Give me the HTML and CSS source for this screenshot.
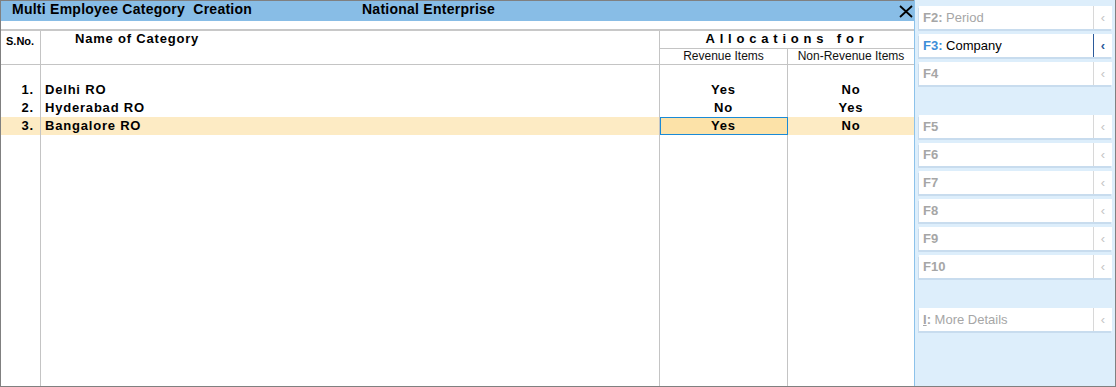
FILE: index.html
```html
<!DOCTYPE html>
<html lang="en">
<head>
  <meta charset="UTF-8" />
  <title>Multi Employee Category Creation</title>
  <link rel="stylesheet" href="styles.css">
</head>
<body>

  <div class="window">
    <div class="main">
      <div class="titlebar">
        <span class="title-name">Multi Employee Category  Creation</span>
        <span class="title-company">National Enterprise</span>
        <span class="close">
          <svg width="14" height="13" viewBox="0 0 14 13"><path d="M1 1 L13 12 M13 1 L1 12" stroke="#000" stroke-width="1.8" fill="none"/></svg>
        </span>
      </div>
      <div class="title-gap"></div>

      <div class="table-head">
        <div class="th th-sno">S.No.</div>
        <div class="th th-name">Name of Category</div>
        <div class="th th-alloc">Allocations for</div>
        <div class="th th-sub th-rev">Revenue Items</div>
        <div class="th th-sub">Non-Revenue Items</div>
      </div>

      <div class="row row-spacer">
        <div class="cell"></div><div class="cell"></div><div class="cell"></div><div class="cell"></div>
      </div>
      <div class="row">
        <div class="cell sno">1.</div>
        <div class="cell name">Delhi RO</div>
        <div class="cell yn">Yes</div>
        <div class="cell yn">No</div>
      </div>
      <div class="row">
        <div class="cell sno">2.</div>
        <div class="cell name">Hyderabad RO</div>
        <div class="cell yn">No</div>
        <div class="cell yn">Yes</div>
      </div>
      <div class="row current">
        <div class="cell sno">3.</div>
        <div class="cell name">Bangalore RO</div>
        <div class="cell yn selected">Yes</div>
        <div class="cell yn">No</div>
      </div>
      <div class="row row-fill">
        <div class="cell"></div><div class="cell"></div><div class="cell"></div><div class="cell"></div>
      </div>
    </div>

    <div class="panel">
      <div class="fkey"><span class="label"><b>F2:</b> Period</span><span class="arrow">‹</span></div>
      <div class="fkey active"><span class="label"><b>F3:</b> Company</span><span class="arrow">‹</span></div>
      <div class="fkey"><span class="label"><b>F4</b></span><span class="arrow">‹</span></div>
      <div class="fkey gap-before"><span class="label"><b>F5</b></span><span class="arrow">‹</span></div>
      <div class="fkey"><span class="label"><b>F6</b></span><span class="arrow">‹</span></div>
      <div class="fkey"><span class="label"><b>F7</b></span><span class="arrow">‹</span></div>
      <div class="fkey"><span class="label"><b>F8</b></span><span class="arrow">‹</span></div>
      <div class="fkey"><span class="label"><b>F9</b></span><span class="arrow">‹</span></div>
      <div class="fkey"><span class="label"><b>F10</b></span><span class="arrow">‹</span></div>
      <div class="fkey gap-before"><span class="label"><b><u>I</u>:</b> More Details</span><span class="arrow">‹</span></div>
    </div>
  </div>

</body>
</html>
```

FILE: styles.css
```css
* {
  box-sizing: border-box;
}

body {
  margin: 0;
  font-family: 'Liberation Sans', Arial, sans-serif;
  color: #000;
  background-color: #fff;
}

.window {
  width: 1116px;
  height: 387px;
  display: flex;
  border-left: 1px solid #808080;
  border-right: 1px solid #808080;
  border-bottom: 1px solid #808080;
}

/* left part: the form */
.main {
  width: 913px;
  display: flex;
  flex-direction: column;
  border-top: 1px solid #808080;
}

.titlebar {
  height: 20px;
  flex-shrink: 0;
  display: flex;
  background-color: #88bde6;
  padding-left: 11px;
  font-size: 14px;
  font-weight: bold;
  line-height: 17px;
  letter-spacing: 0.25px;
}

.title-name {
  width: 350px;
  white-space: pre;
}

.close {
  margin-left: auto;
  margin-right: 1px;
  padding-top: 4px;
  line-height: 0;
}

.title-gap {
  height: 10px;
  flex-shrink: 0;
  border-bottom: 2px solid #c8c8c8;
}

.table-head {
  display: grid;
  grid-template-columns: 40px 619px 128px 126px;
  grid-template-rows: 18px 16px;
  flex-shrink: 0;
}

.th {
  border-bottom: 1px solid #c4c4c4;
  line-height: 14px;
  padding-top: 1px;
}

.th-sno {
  grid-row: 1 / 3;
  border-right: 1px solid #c4c4c4;
  padding-left: 5px;
  padding-top: 3px;
  font-size: 11px;
  font-weight: bold;
}

.th-name {
  grid-row: 1 / 3;
  border-right: 1px solid #c4c4c4;
  padding-left: 34px;
  font-size: 13px;
  font-weight: bold;
  letter-spacing: 0.8px;
}

.th-alloc {
  grid-column: 3 / 5;
  text-align: center;
  font-size: 13px;
  font-weight: bold;
  letter-spacing: 4.8px;
}

.th-sub {
  text-align: center;
  font-size: 12px;
  line-height: 15px;
  padding-top: 0;
  color: #111;
}

.th-rev {
  border-right: 1px solid #c4c4c4;
}

.row {
  display: grid;
  grid-template-columns: 40px 619px 128px 126px;
  height: 18px;
  flex-shrink: 0;
  font-size: 13px;
  font-weight: bold;
  line-height: 18px;
  letter-spacing: 0.8px;
}

.row-spacer {
  height: 16px;
}

.row-fill {
  flex: 1;
  height: auto;
}

.cell {
  border-right: 1px solid #c4c4c4;
}

.cell:last-child {
  border-right: none;
}

.sno {
  text-align: right;
  padding-right: 6px;
}

.name {
  padding-left: 4px;
}

.yn {
  text-align: center;
}

.current {
  background-color: #fdebc4;
}

.selected {
  background-color: #fce2a8;
  outline: 1px solid #1a8ad6;
  outline-offset: -1px;
}

/* right part: button bar */
.panel {
  flex: 1;
  display: flex;
  flex-direction: column;
  background-color: #ddeefb;
  border-left: 1px solid #8cc2ea;
  padding: 6px 3px 0 4px;
}

.fkey {
  height: 23px;
  margin-bottom: 5px;
  display: flex;
  background-color: #fff;
  box-shadow: -1px 2px 0 #c8dcee;
  font-size: 13px;
  line-height: 23px;
  color: #a6a6a6;
}

.fkey .label {
  flex: 1;
  padding-left: 4px;
}

.fkey .arrow {
  width: 19px;
  border-left: 1px solid #d8d8d8;
  text-align: center;
  color: #c4c4c4;
  font-size: 13px;
}

.fkey.active .label {
  color: #000;
}

.fkey.active b {
  color: #3d8ed8;
}

.fkey.active .arrow {
  border-left: 1px solid #2b5a9a;
  color: #2b5a9a;
  font-weight: bold;
}

.gap-before {
  margin-top: 25px;
}
```
